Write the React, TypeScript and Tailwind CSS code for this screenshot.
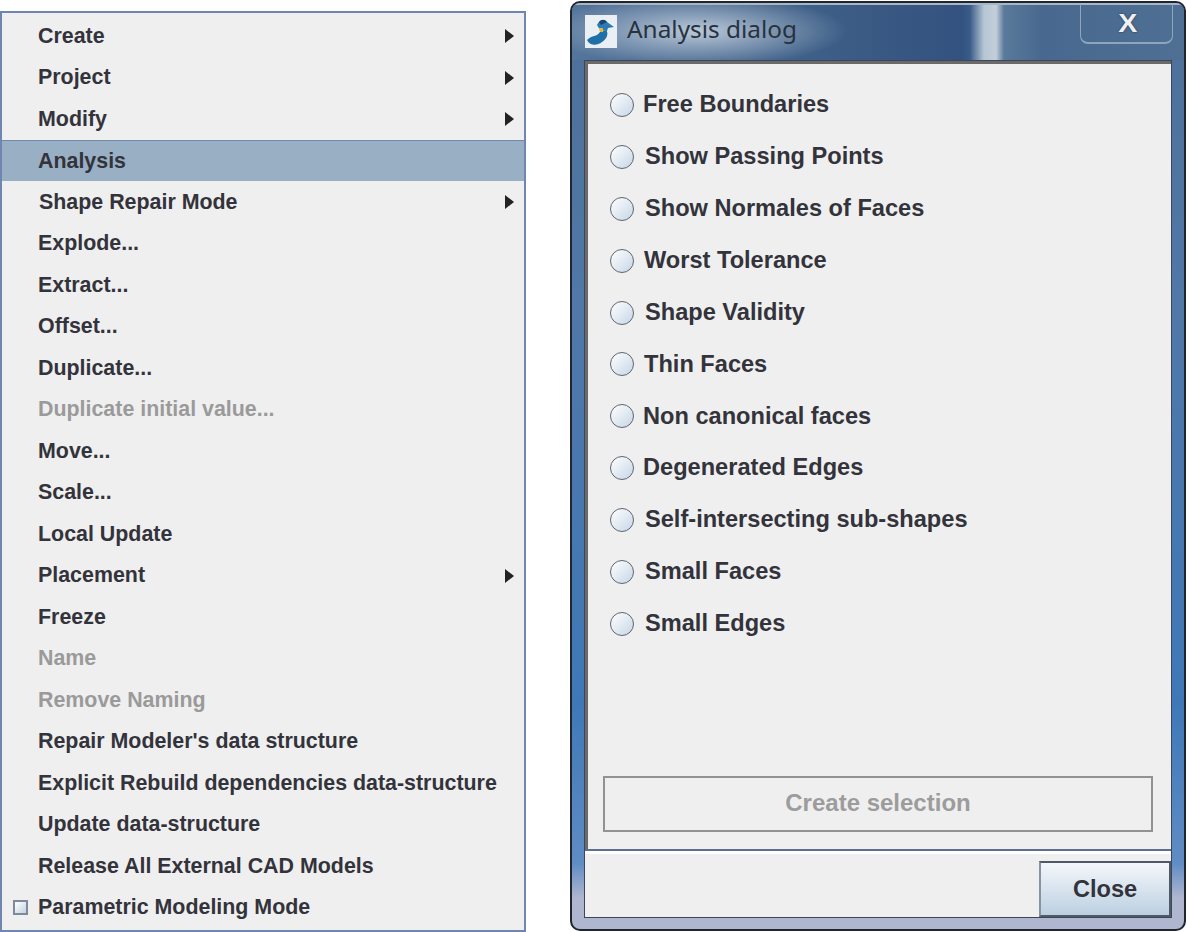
import { useState } from "react";

type MenuRow = { label: string; arrow?: boolean; disabled?: boolean; active?: boolean; check?: boolean; nudge?: boolean };

const MENU: MenuRow[] = [
  { label: "Create", arrow: true },
  { label: "Project", arrow: true },
  { label: "Modify", arrow: true },
  { label: "Analysis", active: true },
  { label: "Shape Repair Mode", arrow: true, nudge: true },
  { label: "Explode..." },
  { label: "Extract..." },
  { label: "Offset..." },
  { label: "Duplicate..." },
  { label: "Duplicate initial value...", disabled: true },
  { label: "Move..." },
  { label: "Scale..." },
  { label: "Local Update" },
  { label: "Placement", arrow: true },
  { label: "Freeze" },
  { label: "Name", disabled: true },
  { label: "Remove Naming", disabled: true },
  { label: "Repair Modeler's data structure" },
  { label: "Explicit Rebuild dependencies data-structure" },
  { label: "Update data-structure" },
  { label: "Release All External CAD Models" },
  { label: "Parametric Modeling Mode", check: true },
];

// the labels in the reference don't share one left edge
const CHECKS = [
  { label: "Free Boundaries", inset: "" },
  { label: "Show Passing Points", inset: "ml-[2px]" },
  { label: "Show Normales of Faces", inset: "ml-[2px]" },
  { label: "Worst Tolerance", inset: "ml-[1px]" },
  { label: "Shape Validity", inset: "ml-[2px]" },
  { label: "Thin Faces", inset: "ml-[1px]" },
  { label: "Non canonical faces", inset: "" },
  { label: "Degenerated Edges", inset: "" },
  { label: "Self-intersecting sub-shapes", inset: "ml-[2px]" },
  { label: "Small Faces", inset: "ml-[2px]" },
  { label: "Small Edges", inset: "ml-[2px]" },
];

function ContextMenu() {
  return (
    <div className="h-[921px] w-[526px] shrink-0 border-2 border-[#6f86b0] bg-[#efefef] pt-[2px]">
      {MENU.map((row) => (
        <div
          key={row.label}
          className={
            "relative flex h-[41.5px] items-center text-[21.4px] font-bold " +
            (row.active ? "border-t border-[#6e88b0] bg-[#98afc4] " : "") +
            (row.disabled ? "text-[#9a9a9a]" : "text-[#33333b]") +
            (row.nudge ? " pl-[37px]" : " pl-[36px]")
          }
        >
          {row.check ? (
            <span className="absolute left-[11px] top-[13px] size-[15px] border-2 border-[#7d8a9c] bg-[linear-gradient(135deg,#ffffff,#c3d2e2)]" />
          ) : null}
          {row.label}
          {row.arrow ? (
            <span className="absolute right-[10px] top-[14px] size-0 border-y-[7px] border-l-[9px] border-y-transparent border-l-[#222]" />
          ) : null}
        </div>
      ))}
    </div>
  );
}

function BirdIcon() {
  return (
    <svg width="32" height="33" viewBox="0 0 32 33" className="shrink-0">
      <rect width="32" height="33" fill="#e9eff3" />
      <path d="M2 25 C7 20 12 22 15 17 L21 15 C24 18 22 24 17 27 C12 31 5 31 2 25 Z" fill="#1f6fa8" />
      <path d="M12 10 C14 5 19 4 22 7 L29 12 L23 13 L22 16 L15 15 Z" fill="#2a7ab5" />
      <path d="M14 7 C16 4 20 4 22 7 L16 10 Z" fill="#17466f" />
      <path d="M14 13 L18 13 L18 17 L15 17 Z" fill="#e2b93a" />
    </svg>
  );
}

function TitleBar() {
  return (
    <div className="flex h-[57px] shrink-0 items-center border-t-2 border-[#a9b6c6] pb-[3px] pl-[13px] bg-[radial-gradient(ellipse_150px_36px_at_125px_26px,rgba(214,224,234,0.8),rgba(214,224,234,0)),linear-gradient(90deg,#55769c_0px,#4d6d94_60px,#3f6088_230px,#33527f_390px,#3a5c88_398px,#b6c6d4_412px,#c3cfd9_424px,#5a7a9b_432px,#48688f_470px,#4f7094_615px)]">
      <BirdIcon />
      <span className="mb-[4px] ml-[10px] font-['Noto_Sans',sans-serif] text-[24.4px] leading-none text-[#27323f]">
        Analysis dialog
      </span>
      <div className="mb-[14px] ml-auto mr-[11px] flex h-[40px] w-[93px] items-center justify-center rounded-b-[8px] border-x border-b-2 border-[#8ea5bc] pl-[3px]">
        <span className="scale-x-110 text-[26px] font-bold leading-none text-[#eef0f4] [text-shadow:0_0_2px_#1f2a3a]">X</span>
      </div>
    </div>
  );
}

function RadioRow({ label, inset }: { label: string; inset: string }) {
  const [on, setOn] = useState(false);
  return (
    <label className="flex h-[51.9px] items-center gap-[9px]" onClick={() => setOn(!on)}>
      <span className="size-[24px] shrink-0 rounded-full border-[1.5px] border-[#5f656e] bg-[linear-gradient(135deg,#ffffff,#c6d6e6)]">
        {on ? <span className="m-[6px] block size-[9px] rounded-full bg-[#333]" /> : null}
      </span>
      <span className={inset}>{label}</span>
    </label>
  );
}

export default function App() {
  return (
    <div className="min-h-[932px] bg-white font-['Liberation_Sans',sans-serif]">
      <div className="flex items-start pt-[11px]">
        <ContextMenu />
        <div className="ml-[44px] mt-[-10px] flex h-[930px] w-[616px] shrink-0 flex-col overflow-hidden rounded-[10px] border-2 border-[#20252e] bg-[linear-gradient(180deg,#4d7098_0px,#5078a8_300px,#3f78b8_700px,#5f8cc4_860px,#aeb6d0_895px)] px-[12px] pb-[11px]">
          <div className="-mx-[12px]">
            <TitleBar />
          </div>
          <div className="flex min-h-0 flex-1 flex-col border border-[#3c4658] bg-[#efefef] text-[23.6px] font-bold text-[#33333b]">
            <div className="flex h-[789px] flex-col border-l-[3px] border-t-[3px] border-[#6a6a6a] pl-[22px] pt-[15px]">
              {CHECKS.map((row) => (
                <RadioRow key={row.label} label={row.label} inset={row.inset} />
              ))}
              <button className="mb-[17px] -ml-[7px] mt-auto h-[56px] w-[550px] border-2 border-[#929292] bg-[#efefef] pb-[3px] text-[24px] font-bold text-[#9c9c9c]">
                Create selection
              </button>
            </div>
            <div className="flex flex-1 justify-end border-t-2 border-[#5d6f8e] pt-[10px] shadow-[inset_0_3px_0_#ffffff]">
              <button className="h-[56px] w-[132px] border-2 border-[#4f5a68] border-l-[#8793a1] bg-[linear-gradient(180deg,#f4f7fa,#bcd0e2)] pt-[1px] text-[23.6px] font-bold text-[#33333b]">
                Close
              </button>
            </div>
          </div>
        </div>
      </div>
    </div>
  );
}
